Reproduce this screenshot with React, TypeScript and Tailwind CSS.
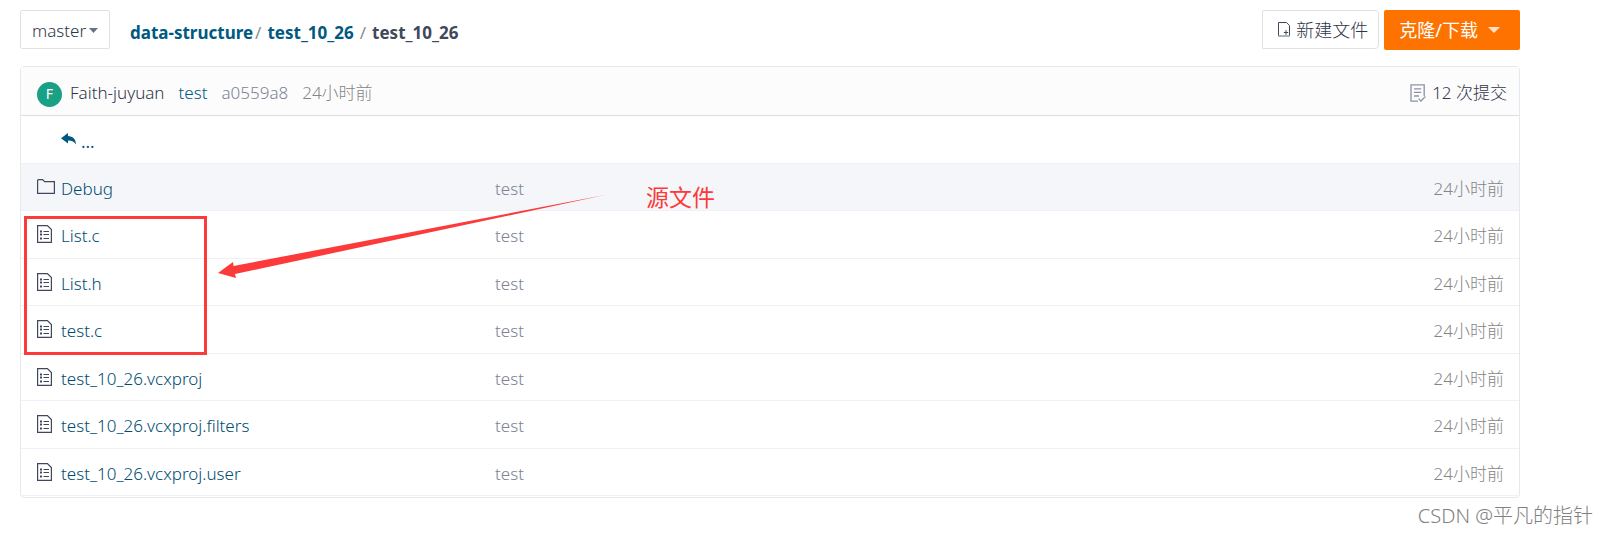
const files = [
  { name: "Debug", type: "dir", message: "test", time: "24小时前" },
  { name: "List.c", type: "file", message: "test", time: "24小时前" },
  { name: "List.h", type: "file", message: "test", time: "24小时前" },
  { name: "test.c", type: "file", message: "test", time: "24小时前" },
  { name: "test_10_26.vcxproj", type: "file", message: "test", time: "24小时前" },
  { name: "test_10_26.vcxproj.filters", type: "file", message: "test", time: "24小时前" },
  { name: "test_10_26.vcxproj.user", type: "file", message: "test", time: "24小时前" },
];

function FolderIcon() {
  return (
    <svg className="w-[18px] h-[18px]" viewBox="0 0 18 18" fill="none" stroke="#40485b" strokeWidth="1.2">
      <path d="M.6 15.4V2.6Q.6 1.6 1.6 1.6H5.6L7.6 3.6H17.4V15.4Z" />
    </svg>
  );
}

function FileIcon() {
  return (
    <svg className="w-[16px] h-[18px]" viewBox="0 0 16 18" fill="none" stroke="#40485b" strokeWidth="1.2">
      <path d="M.6 .6H10.4L14.4 4.6V17.4H.6Z" />
      <path d="M6.5 6.500H12M6.500 9.500H12M6.500 13.500H12" />
      <path d="M3 6.500H5M3 9.500H5M3 13.500H5" strokeWidth="2" />
    </svg>
  );
}

function NewFileIcon() {
  return (
    <svg className="w-3 h-[15px]" viewBox="0 0 12 15" fill="none" stroke="#40485b">
      <path d="M.5 14V.5H8.5L11.5 3.5V14" />
      <path d="M0 14H12" stroke="#9aa1ad" strokeWidth="1.6" />
      <path d="M8 8.2V12.8M5.8 10.5H10.2" />
    </svg>
  );
}

function CommitsIcon() {
  return (
    <svg className="w-4 h-[18px]" viewBox="0 0 16 18" fill="none" stroke="#8c92a4" strokeWidth="1.3">
      <path d="M8 17.2H1V.8H14.2V12" />
      <path d="M4 4.8H11.2M4 8.4H11.2M4 12H9" />
      <path d="M8.6 14.6L11 17L15.4 12.4" />
    </svg>
  );
}

function ReplyIcon() {
  return (
    <svg className="w-4 h-3" viewBox="0 0 16 12" fill="#005980">
      <path d="M0 5.2L7 0V3C11.6 3.2 15 6 15 11.6C13.4 8.8 11 7.6 7 7.6V10.4Z" />
    </svg>
  );
}

function Caret({ className }: { className: string }) {
  return (
    <svg className={className} viewBox="0 0 10 5" preserveAspectRatio="none" fill="currentColor">
      <path d="M0 0H10L5 5Z" />
    </svg>
  );
}

export default function App() {
  return (
    <div className="pl-5 pr-[87px] pt-[10px] bg-white text-[17px] font-light text-[#2f3649] font-['Noto_Sans','Noto_Sans_CJK_SC',sans-serif]">
      <div className="flex items-start justify-between">
        <div className="flex items-center">
          <div className="relative">
            <select
              aria-label="branch"
              defaultValue="master"
              className="appearance-none block w-[90px] h-[39px] pt-[2px] pl-[11px] border border-[#dce3e8] rounded-xs bg-white"
            >
              <option>master</option>
            </select>
            <Caret className="absolute right-3 top-[18px] w-[9px] h-[5px] text-[#6b7283] pointer-events-none" />
          </div>
          <nav className="flex gap-[6px] ml-5 pt-[6px] font-bold text-[#40485b]">
            <a href="#" className="text-[#005980]">data-structure</a>
            <span className="-ml-1 font-normal text-[#8c8c8c]">/</span>
            <a href="#" className="text-[#005980]">test_10_26</a>
            <span className="font-normal text-[#8c8c8c]">/</span>
            <span>test_10_26</span>
          </nav>
        </div>

        <div className="flex gap-[5px] text-lg leading-6">
          <button className="flex items-center gap-[6px] h-[39px] pl-[15px] pr-[10px] border border-[#dce3e8] rounded-r-sm">
            <NewFileIcon />
            新建文件
          </button>
          <button className="flex items-center gap-[10px] h-10 pl-[15px] pr-5 rounded-xs bg-[#fe7300] text-white font-normal">
            克隆/下载
            <Caret className="w-3 h-[6px] text-[#ffe0c8]" />
          </button>
        </div>
      </div>

      <div className="relative mt-4 pb-px border border-[#e3e9ed] rounded">
        <div className="flex items-center h-[49px] pl-4 pr-3 pt-1 border-b border-[#dcdfe1] bg-[#fcfcfc]">
          <span className="flex items-center justify-center size-[25px] mt-[2px] rounded-full bg-[#1aa084] text-white text-sm font-normal">F</span>
          <a href="#" className="ml-2">Faith-juyuan</a>
          <a href="#" className="ml-[14px] text-[#005980]">test</a>
          <a href="#" className="ml-[14px] text-[#7c8296]">a0559a8</a>
          <span className="ml-[14px] text-[#858585]">24小时前</span>
          <a href="#" className="flex items-center gap-[6px] ml-auto">
            <CommitsIcon />
            12 次提交
          </a>
        </div>

        <table className="w-full table-fixed">
          <tbody>
            <tr className="h-[47px] border-b border-[#eef1f5]">
              <td className="w-[474px] pl-10">
                <a href="#" className="flex items-center gap-1 text-[#005980]">
                  <ReplyIcon />
                  <span className="pt-1 font-normal">...</span>
                </a>
              </td>
              <td></td>
              <td></td>
            </tr>
            {files.map((file) => (
              <tr key={file.name} className="odd:h-12 even:h-[47px] border-b border-[#eef1f5] nth-2:bg-[#f5f6fa]">
                <td className="pl-4">
                  <div className="flex items-center gap-2">
                    <span className="w-4">{file.type === "dir" ? <FolderIcon /> : <FileIcon />}</span>
                    <a href="#" className="pt-1 text-[#004d70]">{file.name}</a>
                  </div>
                </td>
                <td className="pt-1 text-[#7c8296]">{file.message}</td>
                <td className="pt-1 pr-[15px] text-right text-[#858585]">{file.time}</td>
              </tr>
            ))}
          </tbody>
        </table>

        {/* annotations */}
        <div className="absolute left-[3px] top-[149px] w-[183px] h-[139px] border-3 border-[#fc3a3a]" />
        <svg className="absolute left-[197px] top-[127px] w-[388px] h-[86px]" viewBox="0 0 388 86" fill="#fc3a3a">
          <path d="M0 79L15 68L15.500 72L387 1L17 80L18 84Z" />
        </svg>
        <div className="absolute left-[625px] top-[114px] text-[23px] leading-8 font-normal text-[#fc3a3a]">源文件</div>
      </div>

      <div className="-mr-[73px] pt-[2px] text-right text-xl leading-8 text-[#808080]">CSDN @平凡的指针</div>
    </div>
  );
}
